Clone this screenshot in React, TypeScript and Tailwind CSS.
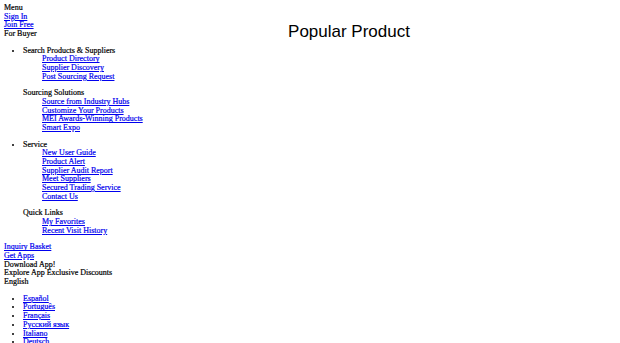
const buyerGroups = [
  {
    title: "Search Products & Suppliers",
    bullet: true,
    links: ["Product Directory", "Supplier Discovery", "Post Sourcing Request"],
  },
  {
    title: "Sourcing Solutions",
    bullet: false,
    links: [
      "Source from Industry Hubs",
      "Customize Your Products",
      "MEI Awards-Winning Products",
      "Smart Expo",
    ],
  },
  {
    title: "Service",
    bullet: true,
    links: [
      "New User Guide",
      "Product Alert",
      "Supplier Audit Report",
      "Meet Suppliers",
      "Secured Trading Service",
      "Contact Us",
    ],
  },
  {
    title: "Quick Links",
    bullet: false,
    links: ["My Favorites", "Recent Visit History"],
  },
]

const languages = ["Español", "Português", "Français", "Русский язык", "Italiano", "Deutsch"]

const Link = ({ children }: { children: React.ReactNode }) => (
  <a href="#" className="text-[#0000ee] underline">
    {children}
  </a>
)

export default function App() {
  return (
    <div className="flex h-[343px] w-[620px] overflow-hidden bg-white text-black">
      {/* left menu, plain document flow */}
      <div className="w-[78px] shrink-0 whitespace-nowrap pl-[4px] pt-[4px] font-['Liberation_Serif',serif] text-[8px] leading-[8.67px] [-webkit-text-stroke:0.2px]">
        <div>Menu</div>
        <div>
          <Link>Sign In</Link>
        </div>
        <div>
          <Link>Join Free</Link>
        </div>
        <div>For Buyer</div>

        <ul className="my-[8px] list-disc pl-[19px]">
          {buyerGroups.map((g, i) => (
            <li key={g.title} className={g.bullet ? "list-item" : "list-none"}>
              {g.title}
              <div className={`pl-[19px] ${i < buyerGroups.length - 1 ? "mb-[8px]" : ""}`}>
                {g.links.map((l) => (
                  <div key={l}>
                    <Link>{l}</Link>
                  </div>
                ))}
              </div>
            </li>
          ))}
        </ul>

        <div>
          <Link>Inquiry Basket</Link>
        </div>
        <div>
          <Link>Get Apps</Link>
        </div>
        <div>Download App!</div>
        <div>Explore App Exclusive Discounts</div>
        <div>English</div>

        <ul className="my-[8px] list-disc pl-[19px]">
          {languages.map((l) => (
            <li key={l}>
              <Link>{l}</Link>
            </li>
          ))}
        </ul>
      </div>

      <div className="flex-1 pt-[22px] text-center font-['Liberation_Sans',Arial,sans-serif] text-[17px] leading-[20px]">
        Popular Product
      </div>
    </div>
  )
}
